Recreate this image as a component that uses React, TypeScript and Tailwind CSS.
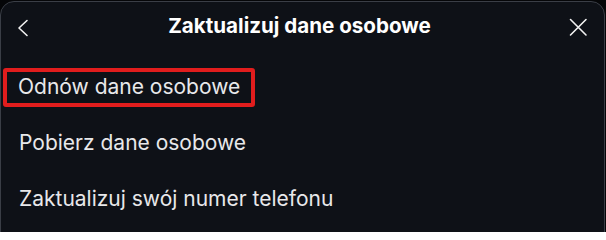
import React from "react";

export default function App() {
  return (
    <div className="w-[606px] h-[232px] bg-[#050608] overflow-hidden" style={{ fontFamily: "Inter, 'Noto Sans', sans-serif" }}>
      <div className="w-[605px] h-[240px] mt-px bg-[#0e1117] border border-[#3a3e46] rounded-t-[14px]">
        <div className="h-[48px] flex items-center justify-between pl-[16px] pr-[16px]">
          <svg width="14" height="20" viewBox="0 0 14 20" className="mt-[3px]">
            <path d="M10 2.5 L2 10 L10 17.5" fill="none" stroke="#f2f2f2" strokeWidth="1.6" strokeLinecap="round" strokeLinejoin="round" />
          </svg>
          <div className="text-[20.6px] font-bold text-white">Zaktualizuj dane osobowe</div>
          <svg width="20" height="20" viewBox="0 0 20 20" className="mt-px">
            <path d="M2.5 2.5 L18 18 M18 2.5 L2.5 18" fill="none" stroke="#f2f2f2" strokeWidth="1.6" strokeLinecap="round" />
          </svg>
        </div>
        <div className="flex flex-col pt-[9px]">
          <div className="h-[56px] flex items-center pl-[2px]">
            <div className="h-[39px] flex items-center border-4 border-[#e11d1d] rounded-[3px] pl-[11px] pr-[11px] text-[21px] text-[#e8e8ea]">
              Odnów dane osobowe
            </div>
          </div>
          <div className="h-[56px] flex items-center pl-[18px] text-[21px] text-[#e8e8ea]">Pobierz dane osobowe</div>
          <div className="h-[56px] flex items-center pl-[18px] text-[21px] text-[#e8e8ea]">Zaktualizuj swój numer telefonu</div>
        </div>
      </div>
    </div>
  );
}
